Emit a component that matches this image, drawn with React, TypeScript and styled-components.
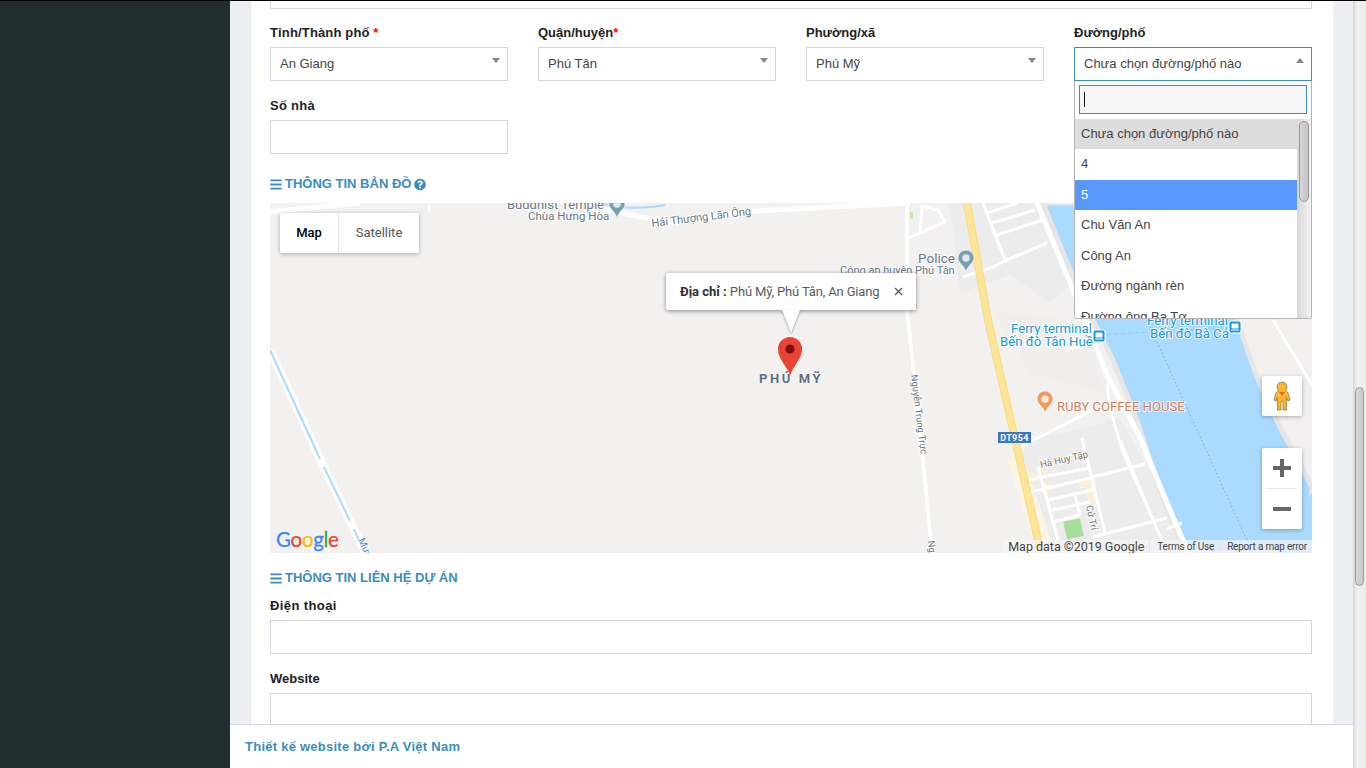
import React from 'react';
import styled, { createGlobalStyle } from 'styled-components';
import { FaBars, FaQuestionCircle } from 'react-icons/fa';

const GlobalStyle = createGlobalStyle`
  html, body {
    margin: 0;
    padding: 0;
    height: 100%;
    overflow: hidden;
    font-family: "Liberation Sans", Arial, sans-serif;
    font-size: 13px;
    color: #333;
  }
  * { box-sizing: border-box; }
`;

const Page = styled.div`
  display: flex;
  height: 768px;
  border-top: 1px solid #000;
  overflow: hidden;
`;

const Sidebar = styled.aside`
  width: 230px;
  flex-shrink: 0;
  background: #222d32;
`;

const Main = styled.main`
  position: relative;
  flex: 1;
  min-width: 0;
  overflow: hidden;
  background: #ecf0f5;
`;

const Panel = styled.section`
  margin: -26px 20px 0;
  padding: 0 21px 0 19px;
  background: #fff;
  border-left: 1px solid #e4e7ec;
  height: 900px;
`;

const FourColumns = styled.div`
  display: grid;
  grid-template-columns: repeat(4, 238px);
  column-gap: 30px;
  margin-top: 16px;
`;

const Field = styled.div`
  position: relative;
`;

const Label = styled.label<{ $track?: number }>`
  display: block;
  height: 15px;
  margin-bottom: 7px;
  font-weight: 700;
  font-size: 13px;
  line-height: 15px;
  letter-spacing: ${p => p.$track ?? 0}px;
  color: #222;
`;

const Required = styled.span`
  color: #f00;
`;

const TextInput = styled.input`
  display: block;
  width: 100%;
  height: 34px;
  border: 1px solid #d2d6de;
  background: #fff;
  outline: none;
`;

const SelectBox = styled.div<{ $open?: boolean }>`
  display: flex;
  align-items: center;
  justify-content: space-between;
  height: 34px;
  padding: 0 7px 2px 9px;
  border: 1px solid ${p => (p.$open ? '#3c8dbc' : '#d2d6de')};
  font-size: 13px;
  color: #444;
  background: #fff;
`;

const Arrow = styled.i<{ $up?: boolean }>`
  display: block;
  width: 0;
  height: 0;
  margin-top: -5px;
  border-left: 4px solid transparent;
  border-right: 4px solid transparent;
  border-${p => (p.$up ? 'bottom' : 'top')}: 5px solid #888;
`;

const Dropdown = styled.div`
  position: absolute;
  z-index: 5;
  top: 56px;
  left: 0;
  width: 238px;
  height: 238px;
  background: #fff;
  border: 1px solid #b5b5b5;
  border-top: none;
  border-radius: 0 0 3px 3px;
  overflow: hidden;
`;

const SearchWrap = styled.div`
  position: relative;
  height: 37.7px;
  padding: 4px 4px 0;
`;

const SearchInput = styled.input`
  display: block;
  width: 100%;
  height: 29px;
  border: 1px solid #3c8dbc;
  background: #f6f6f6;
  outline: none;
`;

const Caret = styled.span`
  position: absolute;
  left: 9px;
  top: 11px;
  width: 1px;
  height: 15px;
  background: #111;
`;

const ResultsRow = styled.div`
  display: flex;
  height: 200px;
`;

const Results = styled.ul`
  flex: 1;
  margin: 0;
  padding: 0;
  list-style: none;
  overflow: hidden;
`;

const Result = styled.li<{ $tone?: 'selected' | 'active' }>`
  height: 30.5px;
  padding: 0 6px;
  line-height: 30.5px;
  font-size: 13px;
  white-space: nowrap;
  color: ${p => (p.$tone === 'active' ? '#fff' : '#444')};
  background: ${p =>
    p.$tone === 'active' ? '#5897fb' : p.$tone === 'selected' ? '#ddd' : '#fff'};
`;

const ListTrack = styled.div`
  width: 14px;
  padding: 2px 2px 0 2px;
  background: linear-gradient(90deg, #d8d8d8, #f2f2f2);
`;

const ListThumb = styled.div`
  height: 81px;
  border: 1px solid #999;
  border-radius: 5px;
  background: linear-gradient(90deg, #d6d6d6, #c4c4c4);
`;

const HouseField = styled(Field)`
  width: 238px;
  margin-top: 17px;
`;

const SectionTitle = styled.h3<{ $top: number; $bottom: number }>`
  display: flex;
  align-items: center;
  gap: 3px;
  height: 16px;
  margin: ${p => p.$top}px 0 ${p => p.$bottom}px;
  font-size: 13px;
  font-weight: 700;
  line-height: 16px;
  color: #3c8dbc;

  svg {
    width: 12px;
    height: 13px;
  }
`;

const MapBox = styled.div`
  position: relative;
  height: 350px;
  overflow: hidden;
  background: #f2f1ef;
  font-family: Roboto, "Liberation Sans", sans-serif;
`;

const MapSvg = styled.svg`
  display: block;
  width: 1042px;
  height: 350px;
`;

const MapTypes = styled.div`
  position: absolute;
  left: 10px;
  top: 10px;
  display: flex;
  height: 40px;
  background: #fff;
  border-radius: 2px;
  box-shadow: 0 1px 4px rgba(0, 0, 0, 0.3);
`;

const MapType = styled.div<{ $active?: boolean }>`
  width: ${p => (p.$active ? 59 : 80)}px;
  font-size: 13px;
  line-height: 40px;
  text-align: center;
  color: ${p => (p.$active ? '#000' : '#565656')};
  font-weight: ${p => (p.$active ? 500 : 400)};
  border-right: ${p => (p.$active ? '1px solid #e6e6e6' : 'none')};
`;

const InfoWindow = styled.div`
  position: absolute;
  left: 396px;
  top: 70px;
  display: flex;
  align-items: center;
  justify-content: space-between;
  width: 250px;
  height: 37px;
  padding: 0 13px 0 14px;
  background: #fff;
  border-radius: 2px;
  box-shadow: 0 1px 4px rgba(0, 0, 0, 0.45);
  font-size: 13px;
  letter-spacing: -0.15px;
  color: #5b5b5b;
  white-space: nowrap;

  &::after {
    content: '';
    position: absolute;
    left: 116px;
    top: 37px;
    border-left: 9px solid transparent;
    border-right: 9px solid transparent;
    border-top: 23px solid #fff;
    filter: drop-shadow(0 1px 1px rgba(0, 0, 0, 0.4));
  }
`;

const InfoStrong = styled.b`
  letter-spacing: 0;
  color: #2f2f2f;
`;

const CloseMark = styled.svg`
  width: 9px;
  height: 9px;
`;

const Marker = styled.svg`
  position: absolute;
  left: 507px;
  top: 133px;
  width: 26px;
  height: 41px;
`;

const PlaceName = styled.div`
  position: absolute;
  left: 489px;
  top: 168px;
  font-size: 13px;
  font-weight: 700;
  letter-spacing: 2.6px;
  white-space: nowrap;
  color: #5f6d84;
  text-shadow: 0 0 2px #fff, 0 0 2px #fff;
`;

const MapButton = styled.div`
  position: absolute;
  right: 10px;
  width: 40px;
  background: #fff;
  border-radius: 2px;
  box-shadow: 0 1px 4px rgba(0, 0, 0, 0.3);
`;

const PegmanButton = styled(MapButton)`
  top: 173px;
  height: 40px;
  display: flex;
  align-items: center;
  justify-content: center;
`;

const ZoomButton = styled(MapButton)`
  top: 245px;
  height: 81px;
  display: flex;
  flex-direction: column;
`;

const ZoomStep = styled.div`
  flex: 1;
  display: flex;
  align-items: center;
  justify-content: center;
`;

const ZoomRule = styled.div`
  height: 1px;
  margin: 0 5px;
  background: #e6e6e6;
`;

const GoogleLogo = styled.div`
  position: absolute;
  left: 6px;
  bottom: 2px;
  font-family: Lato, "Open Sans", sans-serif;
  font-size: 20.5px;
  font-weight: 400;
  line-height: 24px;
  letter-spacing: -0.3px;
  -webkit-text-stroke: 0.35px currentColor;
  text-shadow: 0 0 2px #fff, 0 0 2px #fff;
`;

const LogoLetter = styled.span<{ $color: string }>`
  color: ${p => p.$color};
`;

const Attribution = styled.div`
  position: absolute;
  right: 0;
  bottom: 0;
  display: flex;
  align-items: center;
  height: 13px;
  background: rgba(245, 245, 245, 0.7);
  color: #444;
  white-space: nowrap;
`;

const AttributionItem = styled.span<{ $small?: boolean }>`
  padding: 0 5px 0 ${p => (p.$small ? 7 : 5)}px;
  font-size: ${p => (p.$small ? 10 : 12.5)}px;
  letter-spacing: ${p => (p.$small ? -0.2 : 0)}px;
  line-height: 13px;
  border-left: ${p => (p.$small ? '1px solid #e6e6e6' : 'none')};
`;

const ContactField = styled(Field)`
  margin-bottom: 17px;
`;

const Footer = styled.footer`
  position: absolute;
  left: 0;
  right: 0;
  bottom: 0;
  height: 44px;
  padding-left: 15px;
  border-top: 1px solid #d2d6de;
  background: #fff;
  font-size: 13px;
  font-weight: 700;
  line-height: 43px;
  letter-spacing: 0.25px;
  color: #3c8dbc;
`;

const PageScrollbar = styled.div`
  position: relative;
  width: 13px;
  flex-shrink: 0;
  background: linear-gradient(90deg, #d4d4d4, #f1f1f1 30%, #ececec);
`;

const PageThumb = styled.div`
  position: absolute;
  left: 2px;
  top: 386px;
  width: 9px;
  height: 199px;
  border: 1px solid #999;
  border-radius: 5px;
  background: linear-gradient(90deg, #d8d8d8, #c6c6c6);
`;

const Road = ({ d, w = 3, c = '#fff', dash }: { d: string; w?: number; c?: string; dash?: string }) => (
  <path d={d} fill="none" stroke={c} strokeWidth={w} strokeDasharray={dash} strokeLinejoin="round" />
);

const MapLabel = styled.text<{ $color: string; $size: number }>`
  font-family: Roboto, "Liberation Sans", sans-serif;
  font-size: ${p => p.$size}px;
  fill: ${p => p.$color};
  stroke: #fff;
  stroke-width: 2px;
  stroke-opacity: 0.75;
  paint-order: stroke;
`;

const PinIcon = ({ x, y, c }: { x: number; y: number; c: string }) => (
  <g transform={`translate(${x} ${y})`}>
    <path d="M0 11C-2 4-8 2-8-3a8 8 0 1 1 16 0C8 2 2 4 0 11Z" fill={c} stroke="#fff" strokeWidth="0.6" />
    <circle cy="-3" r="3.8" fill="#fff" opacity="0.75" />
  </g>
);

const FerryIcon = ({ x, y }: { x: number; y: number }) => (
  <g transform={`translate(${x} ${y})`}>
    <rect x="-6" y="-6" width="12" height="12" rx="2" fill="#1a9ad6" stroke="#fff" />
    <path d="M-3 1V-3H3V1ZM-4 3H4" fill="#fff" stroke="#fff" strokeWidth="1" />
  </g>
);

const MapDrawing = () => (
  <MapSvg viewBox="0 0 1042 350">
    <polygon points="680,0 775,0 805,80 780,100 740,72 690,90" fill="#ececec" />
    <polygon points="745,240 815,225 850,215 925,350 770,350" fill="#ececec" />
    <polygon points="725,110 790,115 820,130 835,190 760,170" fill="#f0efed" />
    <polygon points="773,0 803,74 823,117 843,157 867,217 893,297 910,337 913,350 1042,350 1042,284 1010,224 987,174 967,117 890,0" fill="#aadafe" stroke="#e6e6e6" strokeWidth="5" />
    <polygon points="1042,290 1042,350 1010,350" fill="#aadafe" />

    <polygon points="737,258 753,255 786,350 768,350" fill="#fdf4e3" />
    <rect x="757" y="270" width="12" height="8" fill="#fdf0d8" />
    <rect x="770" y="262" width="8" height="7" fill="#fdf0d8" />
    <rect x="772" y="280" width="9" height="9" fill="#fdf0d8" />
    <rect x="809" y="276" width="8" height="9" fill="#fdf0d8" />
    <rect x="817" y="275" width="9" height="30" fill="#fdf0d8" />
    <rect x="795" y="317" width="17" height="18" fill="#a8dc9a" transform="rotate(-12 803 326)" />
    <rect x="640" y="9" width="3" height="7" fill="#c9e8b8" />

    <Road d="M0 147L52 260L82 322L96 352" w={8} />
    <Road d="M0 147L50 256" w={2} c="#aadafe" />
    <Road d="M54 264L80 318" w={2} c="#aadafe" />
    <Road d="M84 326L92 344" w={2} c="#aadafe" />

    <Road d="M-2 9L90 0" w={5} />
    <Road d="M159 0V10" w={2} />
    <Road d="M333 6L400 20L483 8L640 0" w={5} />
    <Road d="M330 0C350 6 375 6 395 2" w={2} c="#aadafe" />

    <Road d="M637 0V107L653 257L662 350" w={3.5} />
    <Road d="M652 3L668 7L675 19L650 30L638 35" w={3} />
    <Road d="M652 3L650 30" w={3} />
    <Road d="M693 74L723 64L737 57L777 40" w={3} />
    <Road d="M713 0L735 57" w={3} />
    <Road d="M717 10L748 0M722 20L765 7M727 32L772 17" w={3} />
    <Road d="M767 0L803 87L815 117L838 174L870 234L900 307L913 337L920 350" w={5} />
    <Road d="M838 180C836 200 845 220 853 250L883 317L895 345" w={2.5} />
    <Road d="M1003 117L1042 182" w={2.5} />
    <Road d="M748 245L823 207" w={3} />
    <Road d="M768 264L788 337M812 235L835 330M757 277L820 265M823 274L875 261M760 289L825 274M778 297L823 287M782 307L820 299M783 319L810 312M805 292L810 312M823 334L897 315M850 237L883 317M897 326L912 320" w={3} />
    <Road d="M795 148L818 140" w={2.5} />

    <Road d="M697 0L718 117L768 337L771 350" w={8} c="#f9dc82" />
    <Road d="M697 0L718 117L768 337L771 350" w={6} c="#fde598" />

    <Road d="M830 132L965 124" w={1} c="#8fd0ee" dash="4 3" />
    <Road d="M877 117L977 337" w={1} c="#9aa7b0" dash="1.5 2.5" />

    <MapLabel x="237" y="6" $color="#66798a" $size={13}>Buddhist Temple</MapLabel>
    <MapLabel x="258" y="17" $color="#66798a" $size={11.5}>Chùa Hưng Hòa</MapLabel>
    <PinIcon x={347} y={4} c="#78a0b2" />
    <MapLabel x="382" y="24" $color="#66798a" $size={11} transform="rotate(-7 382 24)">Hải Thượng Lãn Ông</MapLabel>
    <MapLabel x="648" y="60" $color="#66798a" $size={13.5}>Police</MapLabel>
    <PinIcon x={696} y={58} c="#78a0b2" />
    <MapLabel x="570" y="71" $color="#66798a" $size={11}>Công an huyện Phú Tân</MapLabel>
    <MapLabel x="741" y="130" $color="#1a9ad6" $size={13.2}>Ferry terminal</MapLabel>
    <MapLabel x="730" y="143" $color="#1a9ad6" $size={13.2}>Bến đò Tân Huề</MapLabel>
    <FerryIcon x={829} y={133} />
    <MapLabel x="877" y="122" $color="#1a9ad6" $size={13.2}>Ferry terminal</MapLabel>
    <MapLabel x="880" y="135" $color="#1a9ad6" $size={13.2}>Bến đò Bà Cả</MapLabel>
    <FerryIcon x={965} y={124} />
    <PinIcon x={775} y={199} c="#f29a5e" />
    <MapLabel x="787" y="208" $color="#d0805c" $size={13.1}>RUBY COFFEE HOUSE</MapLabel>
    <MapLabel x="771" y="265" $color="#777" $size={9.5} transform="rotate(-13 771 265)">Hà Huy Tập</MapLabel>
    <MapLabel x="816" y="303" $color="#777" $size={9.5} transform="rotate(78 816 303)">Cử Trí</MapLabel>
    <MapLabel x="641" y="172" $color="#6b7a85" $size={9.5} transform="rotate(83 641 172)">Nguyễn Trung Trực</MapLabel>
    <MapLabel x="658" y="338" $color="#6b7a85" $size={9.5} transform="rotate(83 658 338)">Nguyễn</MapLabel>
    <MapLabel x="88" y="337" $color="#5b8fd0" $size={10} transform="rotate(65 88 337)">Mương</MapLabel>

    <rect x="728" y="229" width="33" height="11" fill="#3a78c4" />
    <text x="744.5" y="238" textAnchor="middle" fill="#fff" fontFamily="Roboto, sans-serif" fontWeight="700" fontSize="9" letterSpacing="0.4">DT954</text>
  </MapSvg>
);

const streets = [
  { name: 'Chưa chọn đường/phố nào', tone: 'selected' as const },
  { name: '4' },
  { name: '5', tone: 'active' as const },
  { name: 'Chu Văn An' },
  { name: 'Công An' },
  { name: 'Đường ngành rèn' },
  { name: 'Đường ông Ba Tơ' },
];

const Select = ({ value }: { value: string }) => (
  <SelectBox>
    {value}
    <Arrow />
  </SelectBox>
);

const App = () => (
  <Page>
    <GlobalStyle />
    <Sidebar />
    <Main>
      <Panel>
        <TextInput />
        <FourColumns>
          <Field>
            <Label $track={0.15}>Tỉnh/Thành phố <Required>*</Required></Label>
            <Select value="An Giang" />
          </Field>
          <Field>
            <Label>Quận/huyện<Required>*</Required></Label>
            <Select value="Phú Tân" />
          </Field>
          <Field>
            <Label>Phường/xã</Label>
            <Select value="Phú Mỹ" />
          </Field>
          <Field>
            <Label>Đường/phố</Label>
            <SelectBox $open>
              Chưa chọn đường/phố nào
              <Arrow $up />
            </SelectBox>
            <Dropdown>
              <SearchWrap>
                <SearchInput />
                <Caret />
              </SearchWrap>
              <ResultsRow>
                <Results>
                  {streets.map(s => (
                    <Result key={s.name} $tone={s.tone}>{s.name}</Result>
                  ))}
                </Results>
                <ListTrack>
                  <ListThumb />
                </ListTrack>
              </ResultsRow>
            </Dropdown>
          </Field>
        </FourColumns>
        <HouseField>
          <Label $track={0.3}>Số nhà</Label>
          <TextInput />
        </HouseField>
        <SectionTitle $top={22} $bottom={11}>
          <FaBars /> THÔNG TIN BẢN ĐỒ <FaQuestionCircle />
        </SectionTitle>
        <MapBox>
          <MapDrawing />
          <MapTypes>
            <MapType $active>Map</MapType>
            <MapType>Satellite</MapType>
          </MapTypes>
          <InfoWindow>
            <span><InfoStrong>Địa chỉ :</InfoStrong> Phú Mỹ, Phú Tân, An Giang</span>
            <CloseMark viewBox="0 0 9 9">
              <path d="M1 1L8 8M8 1L1 8" stroke="#555" strokeWidth="1.2" />
            </CloseMark>
          </InfoWindow>
          <Marker viewBox="0 0 26 41">
            <path d="M13 41C11 30 1 24 1 13a12 12 0 1 1 24 0C25 24 15 30 13 41Z" fill="#ea4335" />
            <circle cx="13" cy="13" r="4.6" fill="#7a1010" />
          </Marker>
          <PlaceName>PHÚ MỸ</PlaceName>
          <PegmanButton>
            <svg width="18" height="30" viewBox="0 0 18 30">
              <path d="M9 1a5 5 0 0 1 3 9c2 .5 3 1.500 3.500 3L17 19l-2 1-1.500-3.500V29H10V20H8v9H4.500V16.500L3 20l-2-1 1.500-6c.5-1.500 1.500-2.500 3.500-3A5 5 0 0 1 9 1Z" fill="#fbb62c" stroke="#8a7a55" strokeWidth="0.8" />
              <path d="M6 11h6l-3 4Z" fill="#e0702a" />
            </svg>
          </PegmanButton>
          <ZoomButton>
            <ZoomStep>
              <svg width="18" height="18" viewBox="0 0 18 18">
                <path d="M7 0h4v7h7v4h-7v7H7v-7H0V7h7Z" fill="#666" />
              </svg>
            </ZoomStep>
            <ZoomRule />
            <ZoomStep>
              <svg width="18" height="4" viewBox="0 0 18 4">
                <rect width="18" height="4" fill="#666" />
              </svg>
            </ZoomStep>
          </ZoomButton>
          <GoogleLogo>
            <LogoLetter $color="#4285f4">G</LogoLetter>
            <LogoLetter $color="#ea4335">o</LogoLetter>
            <LogoLetter $color="#fbbc05">o</LogoLetter>
            <LogoLetter $color="#4285f4">g</LogoLetter>
            <LogoLetter $color="#34a853">l</LogoLetter>
            <LogoLetter $color="#ea4335">e</LogoLetter>
          </GoogleLogo>
          <Attribution>
            <AttributionItem>Map data ©2019 Google</AttributionItem>
            <AttributionItem $small>Terms of Use</AttributionItem>
            <AttributionItem $small>Report a map error</AttributionItem>
          </Attribution>
        </MapBox>
        <SectionTitle $top={17} $bottom={12}>
          <FaBars /> THÔNG TIN LIÊN HỆ DỰ ÁN
        </SectionTitle>
        <ContactField>
          <Label $track={0.4}>Điện thoại</Label>
          <TextInput />
        </ContactField>
        <ContactField>
          <Label>Website</Label>
          <TextInput />
        </ContactField>
      </Panel>
      <Footer>Thiết kế website bởi P.A Việt Nam</Footer>
    </Main>
    <PageScrollbar>
      <PageThumb />
    </PageScrollbar>
  </Page>
);

export default App;
